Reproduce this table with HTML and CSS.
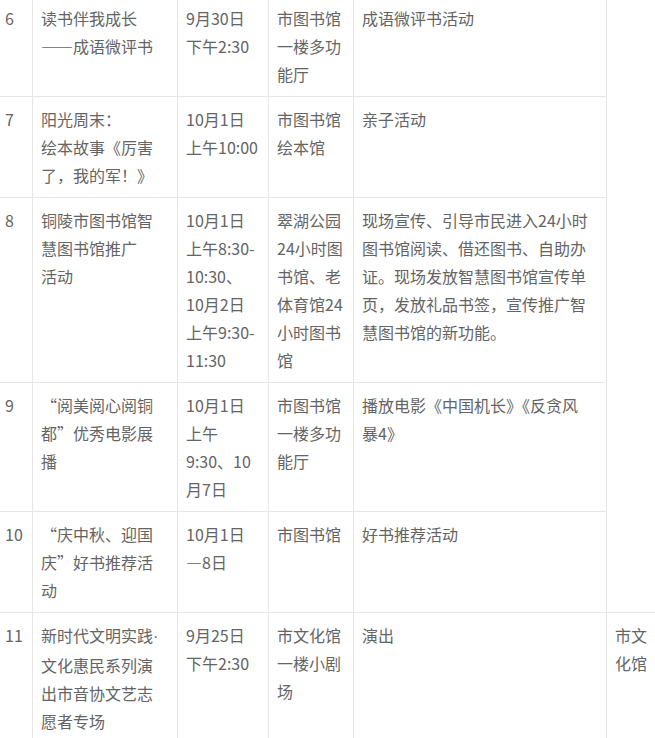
FILE: index.html
```html
<!DOCTYPE html>
<html lang="zh-CN">
<head>
<meta charset="utf-8">
<title>活动安排</title>
<link rel="stylesheet" href="styles.css">
</head>
<body>
<div class="viewport">
  <table class="schedule">
    <colgroup>
      <col class="c-no">
      <col class="c-name">
      <col class="c-time">
      <col class="c-place">
      <col class="c-desc">
      <col class="c-org">
    </colgroup>
    <tbody>
      <tr>
        <td>6</td>
        <td>读书伴我成长<br>——成语微评书</td>
        <td>9月30日<br>下午2:30</td>
        <td>市图书馆<br>一楼多功<br>能厅</td>
        <td>成语微评书活动</td>
        <td rowspan="5"></td>
      </tr>
      <tr>
        <td>7</td>
        <td>阳光周末：<br>绘本故事《厉害<br>了，我的军！》</td>
        <td>10月1日<br>上午10:00</td>
        <td>市图书馆<br>绘本馆</td>
        <td>亲子活动</td>
      </tr>
      <tr>
        <td>8</td>
        <td>铜陵市图书馆智<br>慧图书馆推广<br>活动</td>
        <td>10月1日<br>上午8:30-<br>10:30、<br>10月2日<br>上午9:30-<br>11:30</td>
        <td>翠湖公园<br>24小时图<br>书馆、老<br>体育馆24<br>小时图书<br>馆</td>
        <td>现场宣传、引导市民进入24小时<br>图书馆阅读、借还图书、自助办<br>证。现场发放智慧图书馆宣传单<br>页，发放礼品书签，宣传推广智<br>慧图书馆的新功能。</td>
      </tr>
      <tr>
        <td>9</td>
        <td>“阅美阅心阅铜<br>都”优秀电影展<br>播</td>
        <td>10月1日<br>上午<br>9:30、10<br>月7日</td>
        <td>市图书馆<br>一楼多功<br>能厅</td>
        <td>播放电影《中国机长》《反贪风<br>暴4》</td>
      </tr>
      <tr>
        <td>10</td>
        <td>“庆中秋、迎国<br>庆”好书推荐活<br>动</td>
        <td>10月1日<br>—8日</td>
        <td>市图书馆</td>
        <td>好书推荐活动</td>
      </tr>
      <tr>
        <td>11</td>
        <td>新时代文明实践<span class="dot">·</span><br>文化惠民系列演<br>出市音协文艺志<br>愿者专场</td>
        <td>9月25日<br>下午2:30</td>
        <td>市文化馆<br>一楼小剧<br>场</td>
        <td>演出</td>
        <td>市文<br>化馆</td>
      </tr>
    </tbody>
  </table>
</div>
</body>
</html>
```
FILE: styles.css
```css
html, body {
  margin: 0;
  padding: 0;
  background: #ffffff;
}

.viewport {
  width: 655px;
  height: 738px;
  overflow: hidden;
}

.schedule {
  margin: -5px 0 0 -4px;
  width: 669px;
  table-layout: fixed;
  border-collapse: separate;
  border-spacing: 0;
  border-top: 1px solid #e6e6e6;
  border-left: 1px solid #e6e6e6;
  font-family: "Noto Sans CJK SC", "Noto Sans", sans-serif;
  font-size: 16px;
  line-height: 28px;
  color: #646464;
}

.schedule td {
  box-sizing: border-box;
  padding: 8px;
  vertical-align: top;
  white-space: nowrap;
  border-right: 1px solid #e6e6e6;
  border-bottom: 1px solid #e6e6e6;
}

.dot {
  font-family: "Liberation Sans", sans-serif;
}

.c-no { width: 36px; }
.c-name { width: 145px; }
.c-time { width: 91px; }
.c-place { width: 85px; }
.c-desc { width: 253px; }
.c-org { width: 58px; }
```
